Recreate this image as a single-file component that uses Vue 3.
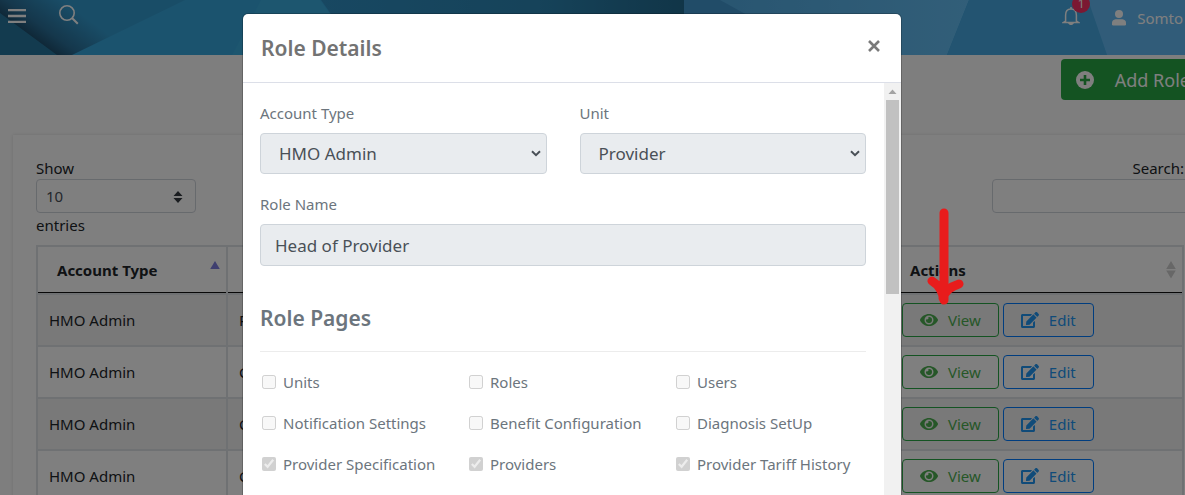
<script setup>
const rows = [
  { type: 'HMO Admin', unit: 'Provider' },
  { type: 'HMO Admin', unit: 'Claims' },
  { type: 'HMO Admin', unit: 'Claims' },
  { type: 'HMO Admin', unit: 'Claims' },
]

const pages = [
  { id: 'units', label: 'Units', on: false },
  { id: 'roles', label: 'Roles', on: false },
  { id: 'users', label: 'Users', on: false },
  { id: 'notification', label: 'Notification Settings', on: false },
  { id: 'benefit', label: 'Benefit Configuration', on: false },
  { id: 'diagnosis', label: 'Diagnosis SetUp', on: false },
  { id: 'specification', label: 'Provider Specification', on: true },
  { id: 'providers', label: 'Providers', on: true },
  { id: 'tariff', label: 'Provider Tariff History', on: true },
]
</script>

<template>
  <div class="app">
    <header class="topbar">
      <svg class="topbar-art" viewBox="0 0 1185 55" preserveAspectRatio="none" aria-hidden="true">
        <defs>
          <linearGradient id="fold" gradientUnits="userSpaceOnUse" x1="28" y1="34" x2="56" y2="-4">
            <stop offset="0" stop-color="#1f506f" />
            <stop offset="0.3" stop-color="#2a6f98" />
            <stop offset="1" stop-color="#339ace" />
          </linearGradient>
          <linearGradient id="mid" x1="0" x2="1" y1="0" y2="0">
            <stop offset="0" stop-color="#3090c4" />
            <stop offset="0.6" stop-color="#2c86b4" />
            <stop offset="1" stop-color="#226b90" />
          </linearGradient>
          <linearGradient id="right" x1="0" x2="1" y1="0" y2="0">
            <stop offset="0" stop-color="#4fa9e0" />
            <stop offset="1" stop-color="#64bdf2" />
          </linearGradient>
        </defs>
        <rect width="1185" height="55" fill="#36a6dc" />
        <path d="M0 0H185L72 55H0Z" fill="url(#fold)" />
        <path d="M0 13L57 55H0Z" fill="#27779f" />
        <path d="M261 0L232 55H360L320 0Z" fill="#3aacdf" />
        <path d="M321 0H684V55H360Z" fill="url(#mid)" />
        <path d="M684 0H969L947 55H684Z" fill="url(#right)" />
        <path d="M684 0H720L820 55H684Z" fill="#4398d0" />
        <path d="M969 0H1088L1107 55H947Z" fill="#47a8e2" />
        <path d="M1088 0H1185V55H1107Z" fill="#62b8f2" />
      </svg>
      <button class="icon-btn" type="button" aria-label="Menu">
        <svg width="18" height="14" viewBox="0 0 18 14" aria-hidden="true">
          <path d="M0 1.2H18M0 7H18M0 12.8H18" stroke="#fff" stroke-width="2.3" />
        </svg>
      </button>
      <button class="icon-btn search-btn" type="button" aria-label="Search">
        <svg width="20" height="20" viewBox="0 0 20 20" fill="none" stroke="#fff" aria-hidden="true">
          <circle cx="8" cy="8" r="7.2" stroke-width="1.6" />
          <path d="M13 13L18.8 18.8" stroke-width="2" />
        </svg>
      </button>
      <div class="topbar-right">
        <button class="icon-btn bell" type="button" aria-label="Notifications">
          <svg width="18" height="18" viewBox="0 0 18 18" fill="none" stroke="#fff" aria-hidden="true">
            <path d="M3.6 14V8.2C3.6 4.5 5.6 2 9 2S14.4 4.5 14.4 8.2V14L16.4 15.4H1.6Z" stroke-width="1.5" />
            <path d="M8 1h2M7 16.3c.6 1.3 3.4 1.3 4 0Z" stroke-width="1.5" />
          </svg>
          <span class="badge">1</span>
        </button>
        <a class="user" href="#">
          <svg width="14" height="16" viewBox="0 0 14 16" fill="#fff" aria-hidden="true">
            <circle cx="7" cy="4" r="4" />
            <path d="M3.5 9.2h7Q14 9.7 14 13v1.3Q14 15.5 12.8 15.5H1.2Q0 15.5 0 14.3V13Q0 9.700 3.500 9.200Z" />
          </svg>
          <span>Somto</span>
        </a>
      </div>
    </header>

    <main class="content">
      <div class="toolbar">
        <button class="add" type="button">
          <svg width="18" height="18" viewBox="0 0 18 18" aria-hidden="true">
            <circle cx="9" cy="9" r="9" fill="#fff" />
            <path d="M9 4V14M4 9H14" stroke="#28a745" stroke-width="2.6" />
          </svg>
          <span>Add Role</span>
        </button>
      </div>

      <section class="card">
        <div class="controls">
          <div class="length">
            <label for="length">Show</label>
            <div class="select-wrap">
              <select id="length" class="small-field"><option>10</option></select>
              <svg class="updown" width="10" height="12" viewBox="0 0 10 12" fill="#343a40" aria-hidden="true">
                <path d="M5 0L9.500 5H.5ZM.5 7H9.500L5 12Z" />
              </svg>
            </div>
            <span>entries</span>
          </div>
          <div class="filter">
            <label for="filter">Search:</label>
            <input id="filter" class="small-field" type="search" />
          </div>
        </div>

        <table>
          <colgroup>
            <col class="col-type" />
            <col />
            <col class="col-actions" />
          </colgroup>
          <thead>
            <tr>
              <th scope="col">
                <div class="th-in">
                  <span>Account Type</span>
                  <svg width="10" height="18" viewBox="0 0 10 18" aria-hidden="true">
                    <path d="M5 0L9.800 8H.2Z" fill="#7f7fe0" />
                  </svg>
                </div>
              </th>
              <th scope="col"><div class="th-in"></div></th>
              <th scope="col">
                <div class="th-in">
                  <span>Actions</span>
                  <svg width="10" height="18" viewBox="0 0 10 18" aria-hidden="true">
                    <path d="M5 0L9.800 8H.2ZM.2 9.500H9.800L5 17.500Z" fill="#cfcfcf" />
                  </svg>
                </div>
              </th>
            </tr>
          </thead>
          <tbody>
            <tr v-for="(row, i) in rows" :key="i">
              <td>{{ row.type }}</td>
              <td>{{ row.unit }}</td>
              <td>
                <div class="actions">
                  <button class="btn view" type="button">
                    <svg width="18" height="16" viewBox="0 0 576 512" fill="currentColor" aria-hidden="true">
                      <path d="M572.520 241.400C518.290 135.590 410.930 64 288 64S57.680 135.640 3.480 241.410a32.350 32.350 0 0 0 0 29.190C57.710 376.410 165.070 448 288 448s230.320-71.640 284.520-177.410a32.350 32.350 0 0 0 0-29.190zM288 400a144 144 0 1 1 144-144 143.930 143.930 0 0 1-144 144zm0-240a95.310 95.310 0 0 0-25.310 3.790 47.850 47.850 0 0 1-66.900 66.900A95.780 95.780 0 1 0 288 160z" />
                    </svg>
                    <span>View</span>
                  </button>
                  <button class="btn edit" type="button">
                    <svg width="18" height="16" viewBox="0 0 576 512" fill="currentColor" aria-hidden="true">
                      <path d="M402.600 83.200l90.200 90.200c3.800 3.800 3.800 10 0 13.800L274.400 405.600l-92.800 10.300c-12.400 1.400-22.900-9.100-21.500-21.500l10.300-92.800L388.800 83.200c3.800-3.800 10-3.800 13.800 0zm162-22.900l-48.800-48.800c-15.200-15.200-39.900-15.200-55.200 0l-35.400 35.400c-3.800 3.800-3.800 10 0 13.800l90.200 90.200c3.800 3.800 10 3.800 13.800 0l35.400-35.400c15.200-15.300 15.200-40 0-55.200zM384 346.200V448H64V128h229.800c3.200 0 6.200-1.300 8.500-3.500l40-40c7.600-7.600 2.200-20.500-8.500-20.500H48C21.500 64 0 85.500 0 112v352c0 26.500 21.500 48 48 48h352c26.500 0 48-21.500 48-48V306.200c0-10.700-12.900-16-20.500-8.500l-40 40c-2.200 2.300-3.500 5.300-3.500 8.500z" />
                    </svg>
                    <span>Edit</span>
                  </button>
                </div>
              </td>
            </tr>
          </tbody>
        </table>
      </section>
    </main>

    <div class="backdrop">
      <div class="modal" role="dialog" aria-labelledby="modal-title">
        <div class="modal-head">
          <h2 id="modal-title">Role Details</h2>
          <button class="close" type="button" aria-label="Close">
            <svg width="12" height="12" viewBox="0 0 12 12" aria-hidden="true">
              <path d="M1 1L11 11M11 1L1 11" stroke="#7a7a7a" stroke-width="2.6" />
            </svg>
          </button>
        </div>
        <div class="modal-scroll">
          <form class="modal-body">
            <div class="pair">
              <div class="group">
                <label for="account">Account Type</label>
                <div class="select-wrap">
                  <select id="account" class="field" disabled><option>HMO Admin</option></select>
                  <svg class="chevron" width="10" height="7" viewBox="0 0 10 7" fill="none" aria-hidden="true">
                    <path d="M1 1.200L5 5.200L9 1.200" stroke="#495057" stroke-width="2" />
                  </svg>
                </div>
              </div>
              <div class="group">
                <label for="unit">Unit</label>
                <div class="select-wrap">
                  <select id="unit" class="field" disabled><option>Provider</option></select>
                  <svg class="chevron" width="10" height="7" viewBox="0 0 10 7" fill="none" aria-hidden="true">
                    <path d="M1 1.200L5 5.200L9 1.200" stroke="#495057" stroke-width="2" />
                  </svg>
                </div>
              </div>
            </div>
            <div class="group">
              <label for="role">Role Name</label>
              <input id="role" class="field role-name" type="text" value="Head of Provider" disabled />
            </div>
            <h2 class="section-title">Role Pages</h2>
            <div class="checks">
              <div v-for="p in pages" :key="p.id" class="check">
                <input :id="p.id" type="checkbox" :checked="p.on" disabled />
                <label :for="p.id">{{ p.label }}</label>
              </div>
            </div>
          </form>
          <div class="scrollbar" aria-hidden="true">
            <svg width="17" height="17" viewBox="0 0 17 17">
              <path d="M8.500 6.500L12.500 11H4.500Z" fill="#a3a3a3" />
            </svg>
            <div class="thumb"></div>
          </div>
        </div>
      </div>
    </div>

    <svg class="arrow" width="38" height="98" viewBox="0 0 38 98" fill="none" aria-hidden="true">
      <path d="M18 5V92M6 73Q16 79 18 92M33 76Q20 80 17 90" stroke="#e81c1c" stroke-width="9" stroke-linecap="round" stroke-linejoin="round" />
    </svg>
  </div>
</template>

<style>
body {
  margin: 0;
  overflow: hidden;
}
</style>

<style scoped>
.app {
  position: relative;
  height: 100vh;
  overflow: hidden;
  background: #fcfcfc;
  font-family: "Noto Sans", "Open Sans", sans-serif;
  font-size: 15px;
  line-height: 20px;
  color: #212529;
}
.app * {
  box-sizing: border-box;
}
button,
input,
select {
  font: inherit;
  margin: 0;
}
svg {
  display: block;
  flex: none;
}
.topbar {
  position: relative;
  display: flex;
  align-items: flex-start;
  height: 55px;
  padding: 0 2px 0 8px;
}
.topbar-art {
  position: absolute;
  inset: 0;
  width: 100%;
  height: 100%;
}
.icon-btn {
  position: relative;
  margin-top: 9px;
  padding: 0;
  border: 0;
  background: none;
}
.search-btn {
  margin: 5px 0 0 33px;
}
.topbar-right {
  position: relative;
  display: flex;
  align-items: flex-start;
  gap: 32px;
  margin-left: auto;
}
.bell {
  margin-top: 7px;
}
.badge {
  position: absolute;
  top: -12px;
  left: 10px;
  width: 18px;
  height: 18px;
  border-radius: 9px;
  background: #f73164;
  color: #fff;
  font-size: 12px;
  line-height: 18px;
  text-align: center;
}
.user {
  display: flex;
  align-items: center;
  gap: 11px;
  margin-top: 8px;
  color: #fff;
  text-decoration: none;
}
.content {
  margin-right: -20px;
  padding-left: 13px;
}
.toolbar {
  display: flex;
  justify-content: flex-end;
  padding: 4px 0 35px;
}
.add {
  display: flex;
  align-items: center;
  gap: 21px;
  height: 41px;
  padding: 0 15px;
  border: 0;
  border-radius: 4px;
  background: #28a745;
  color: #fff;
  font-size: 18px;
  white-space: nowrap;
}
.card {
  padding: 23px 21px 0 23px;
  background: #fff;
  box-shadow: 0 0 3px rgba(0, 0, 0, 0.12);
}
.controls {
  display: flex;
  justify-content: space-between;
  margin-bottom: 10px;
}
.length {
  width: 160px;
}
.length label,
.filter label {
  display: block;
  margin-bottom: 1px;
}
.length span {
  display: block;
  margin-top: 2px;
}
.filter {
  width: 192px;
  text-align: right;
}
.filter input {
  width: calc(100% + 16px);
}
.select-wrap {
  position: relative;
}
.small-field {
  display: block;
  width: 100%;
  height: 34px;
  padding: 0 9px;
  appearance: none;
  border: 1px solid #ced4da;
  border-radius: 4px;
  background: #fff;
  color: #495057;
}
.updown {
  position: absolute;
  top: 12px;
  right: 13px;
}
table {
  width: 100%;
  table-layout: fixed;
  border-collapse: collapse;
}
.col-type {
  width: 190px;
}
.col-actions {
  width: 293px;
}
th,
td {
  border: 2px solid #dee2e6;
  text-align: left;
}
th {
  padding: 0 6px 0 19px;
  box-shadow: inset 0 -1px 0 #111;
}
.th-in {
  display: flex;
  align-items: center;
  justify-content: space-between;
  height: 46px;
}
td {
  height: 52px;
  padding: 8px 11px;
}
tbody tr:nth-child(odd) {
  background: #f2f2f2;
}
.actions {
  display: flex;
  gap: 4px;
}
.btn {
  display: flex;
  align-items: center;
  gap: 10px;
  height: 34px;
  padding: 0 17px;
  border: 1px solid;
  border-radius: 4px;
  background: none;
}
.view {
  border-color: #28a745;
}
.view > * {
  color: #4caf50;
}
.edit {
  border-color: #007bff;
}
.edit > * {
  color: #2196f3;
}
.backdrop {
  position: absolute;
  inset: 0;
  display: flex;
  justify-content: center;
  align-items: flex-start;
  padding: 14px 41px 0 0;
  background: rgba(0, 0, 0, 0.5);
}
.modal {
  display: flex;
  flex-direction: column;
  width: 100%;
  max-width: 658px;
  height: 100%;
  overflow: hidden;
  border-radius: 5px 5px 0 0;
  background: #fff;
  box-shadow: 0 0 0 1px rgba(0, 0, 0, 0.2);
  color: #6c757d;
}
.modal-head {
  display: flex;
  align-items: center;
  justify-content: space-between;
  flex: none;
  height: 69px;
  padding: 0 21px 0 18px;
  border-bottom: 1px solid #dcdfe8;
}
h2 {
  margin: 0;
  font-size: 21px;
  font-weight: 600;
  line-height: 28px;
  color: #6c757d;
}
.modal-head h2 {
  color: #737373;
}
.close {
  padding: 0;
  border: 0;
  background: none;
  margin-bottom: 4px;
}
.modal-scroll {
  display: flex;
  flex: 1;
  min-height: 0;
}
.modal-body {
  flex: 1;
  min-width: 0;
  padding: 20px 18px 0 17px;
}
.pair {
  display: grid;
  grid-template-columns: 1fr 1fr;
  gap: 33px;
  margin-bottom: 20px;
}
.group label {
  display: block;
  margin-bottom: 10px;
}
.field {
  display: block;
  width: 100%;
  height: 41px;
  padding: 0 14px;
  appearance: none;
  border: 1px solid #ced4da;
  border-radius: 4px;
  background: #e9ecef;
  color: #495057;
  font-size: 17px;
  opacity: 1;
}
select.field {
  padding-left: 18px;
}
.role-name {
  height: 42px;
}
.chevron {
  position: absolute;
  top: 17px;
  right: 6px;
}
.section-title {
  margin-top: 38px;
  padding-bottom: 19px;
  border-bottom: 1px solid #ececec;
}
.checks {
  display: grid;
  grid-template-columns: repeat(3, 207px);
  row-gap: 21px;
  padding-top: 20px;
}
.check {
  display: flex;
  align-items: center;
  gap: 7px;
  padding-left: 2px;
  white-space: nowrap;
}
.check input {
  flex: none;
  width: 14px;
  height: 14px;
}
.scrollbar {
  flex: none;
  width: 17px;
  background: #f1f1f1;
}
.thumb {
  width: 13px;
  height: 194px;
  margin: 0 auto;
  background: #c1c1c1;
}
.arrow {
  position: absolute;
  top: 208px;
  left: 926px;
}
</style>
